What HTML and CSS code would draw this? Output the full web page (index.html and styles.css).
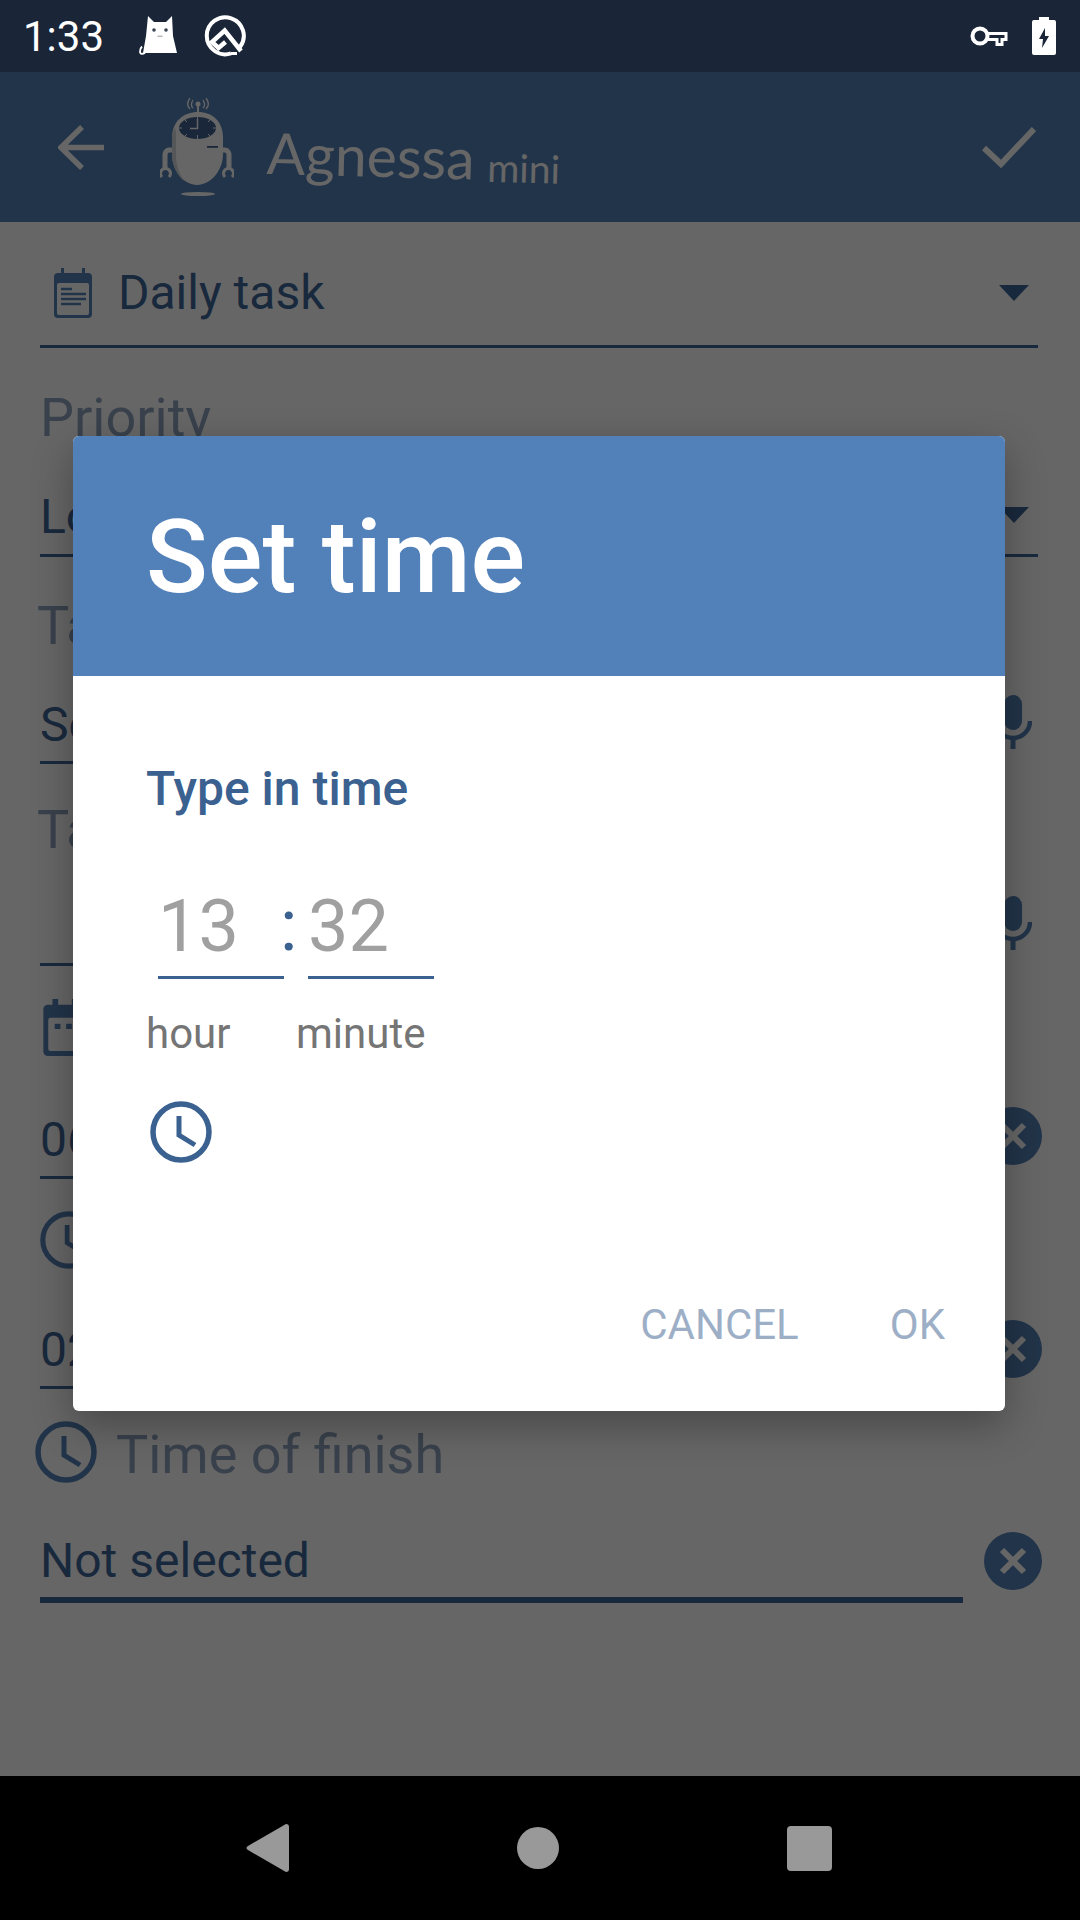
FILE: index.html
```html
<!DOCTYPE html>
<html lang="en">
<head>
  <meta charset="UTF-8" />
  <meta name="viewport" content="width=device-width, initial-scale=1.0" />
  <title>Agnessa mini - Set time</title>
  <link rel="stylesheet" href="styles.css">
</head>
<body>

<div id="phone">

  <header class="status-bar">
    <span class="status-time">1:33</span>
    <svg class="icon-cat" viewBox="0 0 40 40">
      <path d="M10 0l6 6h12l6-6 1 20 4 17H5l3-17z" fill="#fff"/>
      <path d="M7 36.500c-2 2-5 2-5-1 0-2 1-4 2-5" fill="none" stroke="#fff" stroke-width="1.800"/>
      <circle cx="16" cy="14" r="1.800" fill="#3a4453"/>
      <circle cx="28" cy="14" r="1.800" fill="#3a4453"/>
      <rect x="19.500" y="19.500" width="5" height="1.600" fill="#b5bac2"/>
    </svg>
    <svg class="icon-q" viewBox="0 0 42 42">
      <path d="M27 38.400A18.500 18.500 0 1 1 36 32" fill="none" stroke="#fff" stroke-width="4"/>
      <path d="M27 38.500h6" stroke="#fff" stroke-width="3"/>
      <path d="M21.500 27 14.500 33 8 27 20.700 15.500 37 36" fill="none" stroke="#fff" stroke-width="4.500"/>
    </svg>
    <span class="status-gap"></span>
    <svg class="icon-key" viewBox="0 0 38 22">
      <circle cx="10" cy="11" r="7.500" fill="none" stroke="#fff" stroke-width="4"/>
      <path d="M18 8.500h18v6h-4v5h-5v-5h-9" fill="none" stroke="#fff" stroke-width="3"/>
    </svg>
    <svg class="icon-battery" viewBox="0 0 24 38">
      <path d="M7 0h10v3h5a2 2 0 0 1 2 2v31a2 2 0 0 1-2 2H2a2 2 0 0 1-2-2V5a2 2 0 0 1 2-2h5z" fill="#fff"/>
      <path d="M13 11 7 22h4l-1 9 7-12h-4z" fill="#1a2638"/>
    </svg>
  </header>

  <div class="app-bar">
    <svg class="icon-back" viewBox="0 0 46 45">
      <path d="M46 22.500H5M24 2 3 22.500 24 43" fill="none" stroke="#fff" stroke-width="5.500"/>
    </svg>
    <svg class="logo" viewBox="0 0 74 98">
      <g fill="none" stroke="#fff" stroke-width="1.300">
        <path d="M33 2c-2 3-2 6 0 8M30 0c-3 4-3 8 0 11M43 2c2 3 2 6 0 8M46 0c3 4 3 8 0 11"/>
      </g>
      <circle cx="38" cy="6" r="2.500" fill="#fff"/>
      <rect x="37" y="7" width="2" height="7" fill="#fff"/>
      <!-- arms and claws -->
      <path d="M14 52H9c-3 0-4 3-4 5v14M62 52h3c3 0 4 3 4 5v14" fill="none" stroke="#fff" stroke-width="5"/>
      <path d="M2 79a5 5 0 1 1 7 0M65 79a5 5 0 1 1 7 0" fill="none" stroke="#fff" stroke-width="3"/>
      <!-- body -->
      <path d="M38 14C24 14 12 23 12 40v16c0 17 12 31 25 31s26-14 26-31V40C63 23 52 14 38 14z" fill="#fff"/>
      <path d="M15 30c-2 3-3 6-3 10v16c0 11 5 21 12 27-5-8-8-16-8-27V40c0-4 0-7-1-10z" fill="#d4d7dc"/>
      <!-- clock face -->
      <ellipse cx="37.500" cy="30" rx="18.500" ry="11" fill="#416090"/>
      <path d="M37.500 19v4M37.500 37v4M19 30h3M53 30h3M25 22l2 2M50 22l-2 2M25 38l2-2M50 38l-2-2" stroke="#fff" stroke-width="1"/>
      <path d="M37.500 21v9.500H30" fill="none" stroke="#fff" stroke-width="1.500"/>
      <rect x="47" y="48" width="11" height="1.800" fill="#416090"/>
      <ellipse cx="38" cy="96" rx="17" ry="2" fill="#fff"/>
    </svg>
    <div class="logo-title">
      <span class="logo-name">Agnessa</span>
      <span class="logo-mini">mini</span>
    </div>
    <svg class="icon-check" viewBox="0 0 54 41">
      <path d="M2 21 19 37 52 2" fill="none" stroke="#fff" stroke-width="6"/>
    </svg>
  </div>

  <main class="form">
    <div class="field field-type">
      <svg class="icon-calendar" viewBox="0 0 38 50">
        <path d="M7 0h3v5h18V0h3v5h3a4 4 0 0 1 4 4v37a4 4 0 0 1-4 4H4a4 4 0 0 1-4-4V9a4 4 0 0 1 4-4h3z" fill="#5582b7"/>
        <rect x="3" y="15" width="32" height="32" rx="2" fill="#fff"/>
        <path d="M7 21h11M7 26h25M7 31h25M7 36h20" stroke="#5582b7" stroke-width="2.500"/>
      </svg>
      <span>Daily task</span>
      <svg class="icon-drop" viewBox="0 0 30 16"><path d="M0 0h30L15 16z"/></svg>
    </div>

    <div class="label label-priority">Priority</div>
    <div class="field field-priority">
      <span>Low</span>
      <svg class="icon-drop" viewBox="0 0 30 16"><path d="M0 0h30L15 16z"/></svg>
    </div>

    <div class="label label-title">Task title</div>
    <div class="row row-title">
      <div class="field field-grow">Select</div>
      <svg class="icon-mic" viewBox="0 0 38 54">
        <rect x="10" y="0" width="18" height="35" rx="9" fill="#5582b7"/>
        <path d="M2 26a17 17 0 0 0 34 0" fill="none" stroke="#5582b7" stroke-width="4.500"/>
        <rect x="16.500" y="42" width="5" height="12" fill="#5582b7"/>
      </svg>
    </div>

    <div class="label label-text">Task text</div>
    <div class="row row-text">
      <div class="field field-grow field-empty"></div>
      <svg class="icon-mic" viewBox="0 0 38 54">
        <rect x="10" y="0" width="18" height="35" rx="9" fill="#5582b7"/>
        <path d="M2 26a17 17 0 0 0 34 0" fill="none" stroke="#5582b7" stroke-width="4.500"/>
        <rect x="16.500" y="42" width="5" height="12" fill="#5582b7"/>
      </svg>
    </div>

    <div class="label label-row label-date">
      <svg class="icon-calendar icon-calendar-big" viewBox="0 0 38 50">
        <path d="M8 0h5v5h12V0h5v5h4a4 4 0 0 1 4 4v37a4 4 0 0 1-4 4H4a4 4 0 0 1-4-4V9a4 4 0 0 1 4-4h4z" fill="#5582b7"/>
        <rect x="4.300" y="16.500" width="29.400" height="29.200" rx="2" fill="#fff"/>
        <path d="M10 24h5M20 24h5" stroke="#5582b7" stroke-width="4.500"/>
      </svg>
      <span>Date</span>
    </div>
    <div class="row row-date">
      <div class="field field-grow">06.12.2019</div>
      <svg class="icon-clear" viewBox="0 0 58 58">
        <circle cx="29" cy="29" r="29" fill="#5582b7"/>
        <path d="M18 18l22 22M40 18 18 40" stroke="#fff" stroke-width="6"/>
      </svg>
    </div>

    <div class="label label-row label-start">
      <svg class="icon-clock icon-clock-mid" viewBox="0 0 62 62">
        <circle cx="31" cy="31" r="28" fill="none" stroke="#5582b7" stroke-width="5.500"/>
        <path d="M29 15v19l16 10" fill="none" stroke="#5582b7" stroke-width="5"/>
      </svg>
      <span>Time of start</span>
    </div>
    <div class="row row-start">
      <div class="field field-grow">02:15</div>
      <svg class="icon-clear" viewBox="0 0 58 58">
        <circle cx="29" cy="29" r="29" fill="#5582b7"/>
        <path d="M18 18l22 22M40 18 18 40" stroke="#fff" stroke-width="6"/>
      </svg>
    </div>

    <div class="label label-row label-finish">
      <svg class="icon-clock" viewBox="0 0 62 62">
        <circle cx="31" cy="31" r="28" fill="none" stroke="#5582b7" stroke-width="5.500"/>
        <path d="M29 15v19l16 10" fill="none" stroke="#5582b7" stroke-width="5"/>
      </svg>
      <span>Time of finish</span>
    </div>
    <div class="row row-finish">
      <div class="field field-grow field-thick">Not selected</div>
      <svg class="icon-clear" viewBox="0 0 58 58">
        <circle cx="29" cy="29" r="29" fill="#5582b7"/>
        <path d="M18 18l22 22M40 18 18 40" stroke="#fff" stroke-width="6"/>
      </svg>
    </div>
  </main>

  <nav class="nav-bar">
    <svg class="nav-back" viewBox="0 0 43 48">
      <path d="M40 0c2 0 3 1 3 3v42c0 2-1 3-3 3L2 26c-2-1-2-3 0-4z" fill="#999"/>
    </svg>
    <span class="nav-home"></span>
    <span class="nav-recent"></span>
  </nav>

  <!-- dialog on top of the dimmed page -->
  <div class="scrim">
    <section class="dialog">
      <h1 class="dialog-head">Set time</h1>
      <div class="dialog-body">
        <h2 class="dialog-sub">Type in time</h2>
        <div class="time-row">
          <div class="time-box">13</div>
          <div class="time-colon">:</div>
          <div class="time-box">32</div>
        </div>
        <div class="time-labels">
          <span class="time-hour">hour</span>
          <span>minute</span>
        </div>
        <svg class="dialog-clock" viewBox="0 0 62 62">
          <circle cx="31" cy="31" r="28" fill="none" stroke="#3b6190" stroke-width="5.500"/>
          <path d="M29 15v19l16 10" fill="none" stroke="#3b6190" stroke-width="5"/>
        </svg>
        <div class="dialog-actions">
          <span>CANCEL</span>
          <span>OK</span>
        </div>
      </div>
    </section>
  </div>

</div>

</body>
</html>
```

FILE: styles.css
```css
*,
*::before,
*::after {
  box-sizing: border-box;
  margin: 0;
  padding: 0;
}

body {
  font-family: Roboto, Arial, sans-serif;
  background-color: #fff;
}

svg {
  display: block;
  flex: none;
}

#phone {
  position: relative;
  width: 1080px;
  height: 1920px;
  overflow: hidden;
  display: flex;
  flex-direction: column;
}

/* status bar */
.status-bar {
  height: 72px;
  background-color: #1a2638;
  color: #fff;
  display: flex;
  align-items: center;
  padding: 0 24px 0 23px;
}

.status-time {
  font-size: 42px;
  width: 115px;
}

.icon-cat { width: 40px; height: 40px; margin-right: 26px; }
.icon-q { width: 42px; height: 42px; }
.status-gap { flex: 1; }
.icon-key { width: 38px; height: 22px; margin-right: 24px; }
.icon-battery { width: 24px; height: 38px; }

/* app bar */
.app-bar {
  height: 150px;
  background-color: #5582b7;
  display: flex;
  align-items: center;
  padding: 0 44px 0 58px;
  color: #fff;
}

.icon-back { width: 46px; height: 45px; margin-right: 56px; }
.logo { width: 74px; height: 98px; margin-right: 33px; }

.logo-title {
  flex: 1;
  display: flex;
  align-items: baseline;
  font-family: Lato, sans-serif;
  transform: rotate(1.5deg);
  transform-origin: left center;
  padding-top: 10px;
}

.logo-name { font-size: 57px; margin-right: 13px; }
.logo-mini { font-size: 39px; position: relative; top: 2px; }

.icon-check { width: 54px; height: 41px; }

/* form behind the dialog */
.form {
  flex: 1;
  background-color: #fff;
  padding: 35px 42px 0 40px;
  color: #3f6698;
  font-size: 48px;
}

.field {
  display: flex;
  align-items: center;
  line-height: 72px;
  border-bottom: 3px solid #3f6698;
  white-space: nowrap;
  overflow: hidden;
}

.field-type { padding-bottom: 16px; }
.field-type .icon-drop { margin-bottom: 0; }
.field-priority { margin-top: 27px; padding-bottom: 1px; }
.field-empty { height: 100px; }
.field-thick { border-bottom-width: 6px; }
.field-grow { flex: 1; }

.icon-calendar { width: 38px; height: 50px; margin: 0 26px 0 14px; }
.icon-calendar-big { width: 44px; height: 57px; margin: 0 20px 0 3px; }

.icon-drop {
  width: 30px;
  height: 16px;
  margin: 0 9px 4px auto;
  fill: #3f6698;
}

.label {
  font-size: 54px;
  line-height: 72px;
  color: #90a4be;
  white-space: nowrap;
}

.label-row {
  display: flex;
  align-items: center;
}

.label-priority { margin-top: 34px; }
.label-title { margin-top: 33px; margin-left: -3px; }
.label-text { margin-top: 30px; margin-left: -3px; }
.label-date { margin-top: 25px; }
.label-start { margin-top: 25px; }
.label-finish { margin-top: 30px; }

.icon-clock { width: 62px; height: 62px; margin: 0 19px 6px -5px; }
.icon-clock-mid { width: 58px; height: 58px; margin: 0 19px 0 0; }

.row {
  display: flex;
  align-items: flex-start;
  margin-right: -4px;
}

.row-title { margin-top: 27px; }
.row-date { margin-top: 41px; }
.row-start { margin-top: 38px; }
.row-finish { margin-top: 34px; }

.row-title .field-grow { margin-right: 72px; }
.row-text .field-grow { margin-right: 72px; }

.icon-mic {
  width: 38px;
  height: 54px;
  margin: 6px 10px 0 -68px;
}

.row-text .icon-mic { margin-top: 30px; }

.icon-clear {
  width: 58px;
  height: 58px;
  margin: 3px 0 0 21px;
}

.row-start .icon-clear { margin-top: 6px; }
.row-finish .icon-clear { margin-top: 7px; }

/* nav bar */
.nav-bar {
  height: 144px;
  background-color: #000;
  display: flex;
  align-items: center;
  justify-content: center;
  gap: 228px;
  padding-right: 2px;
}

.nav-back { width: 43px; height: 48px; }

.nav-home {
  width: 42px;
  height: 42px;
  border-radius: 50%;
  background-color: #999;
}

.nav-recent {
  width: 45px;
  height: 45px;
  border-radius: 4px;
  background-color: #999;
}

/* dialog */
.scrim {
  position: absolute;
  top: 72px;
  left: 0;
  right: 0;
  bottom: 144px;
  background-color: rgba(0, 0, 0, 0.6);
  display: flex;
  align-items: center;
  justify-content: center;
  padding: 0 2px 1px 0;
}

.dialog {
  width: 932px;
  background-color: #fff;
  border-radius: 6px;
  overflow: hidden;
  box-shadow: 0 14px 40px rgba(0, 0, 0, 0.3);
}

.dialog-head {
  height: 240px;
  background-color: #5280b9;
  color: #fff;
  font-size: 102px;
  font-weight: 500;
  display: flex;
  align-items: center;
  padding: 2px 0 0 73px;
}

.dialog-body {
  padding: 85px 60px 58px 73px;
}

.dialog-sub {
  font-size: 48px;
  line-height: 56px;
  font-weight: 500;
  color: #3b6190;
}

.time-row {
  display: flex;
  margin: 64px 0 0 12px;
}

.time-box {
  width: 126px;
  height: 98px;
  border-bottom: 3px solid #3b6190;
  font-size: 72px;
  font-weight: 400;
  line-height: 92px;
  color: #a0a0a0;
}

.time-colon {
  width: 24px;
  margin-left: -4px;
  margin-right: 4px;
  font-size: 72px;
  font-weight: 400;
  line-height: 90px;
  color: #3b6190;
}

.time-labels {
  display: flex;
  margin-top: 27px;
  font-size: 42px;
  line-height: 56px;
  color: #757575;
}

.time-hour { width: 150px; }

.dialog-clock {
  width: 62px;
  height: 62px;
  margin: 39px 0 0 4px;
}

.dialog-actions {
  display: flex;
  justify-content: flex-end;
  gap: 91px;
  margin-top: 134px;
  font-size: 42px;
  line-height: 56px;
  color: #9dafc6;
}
```
